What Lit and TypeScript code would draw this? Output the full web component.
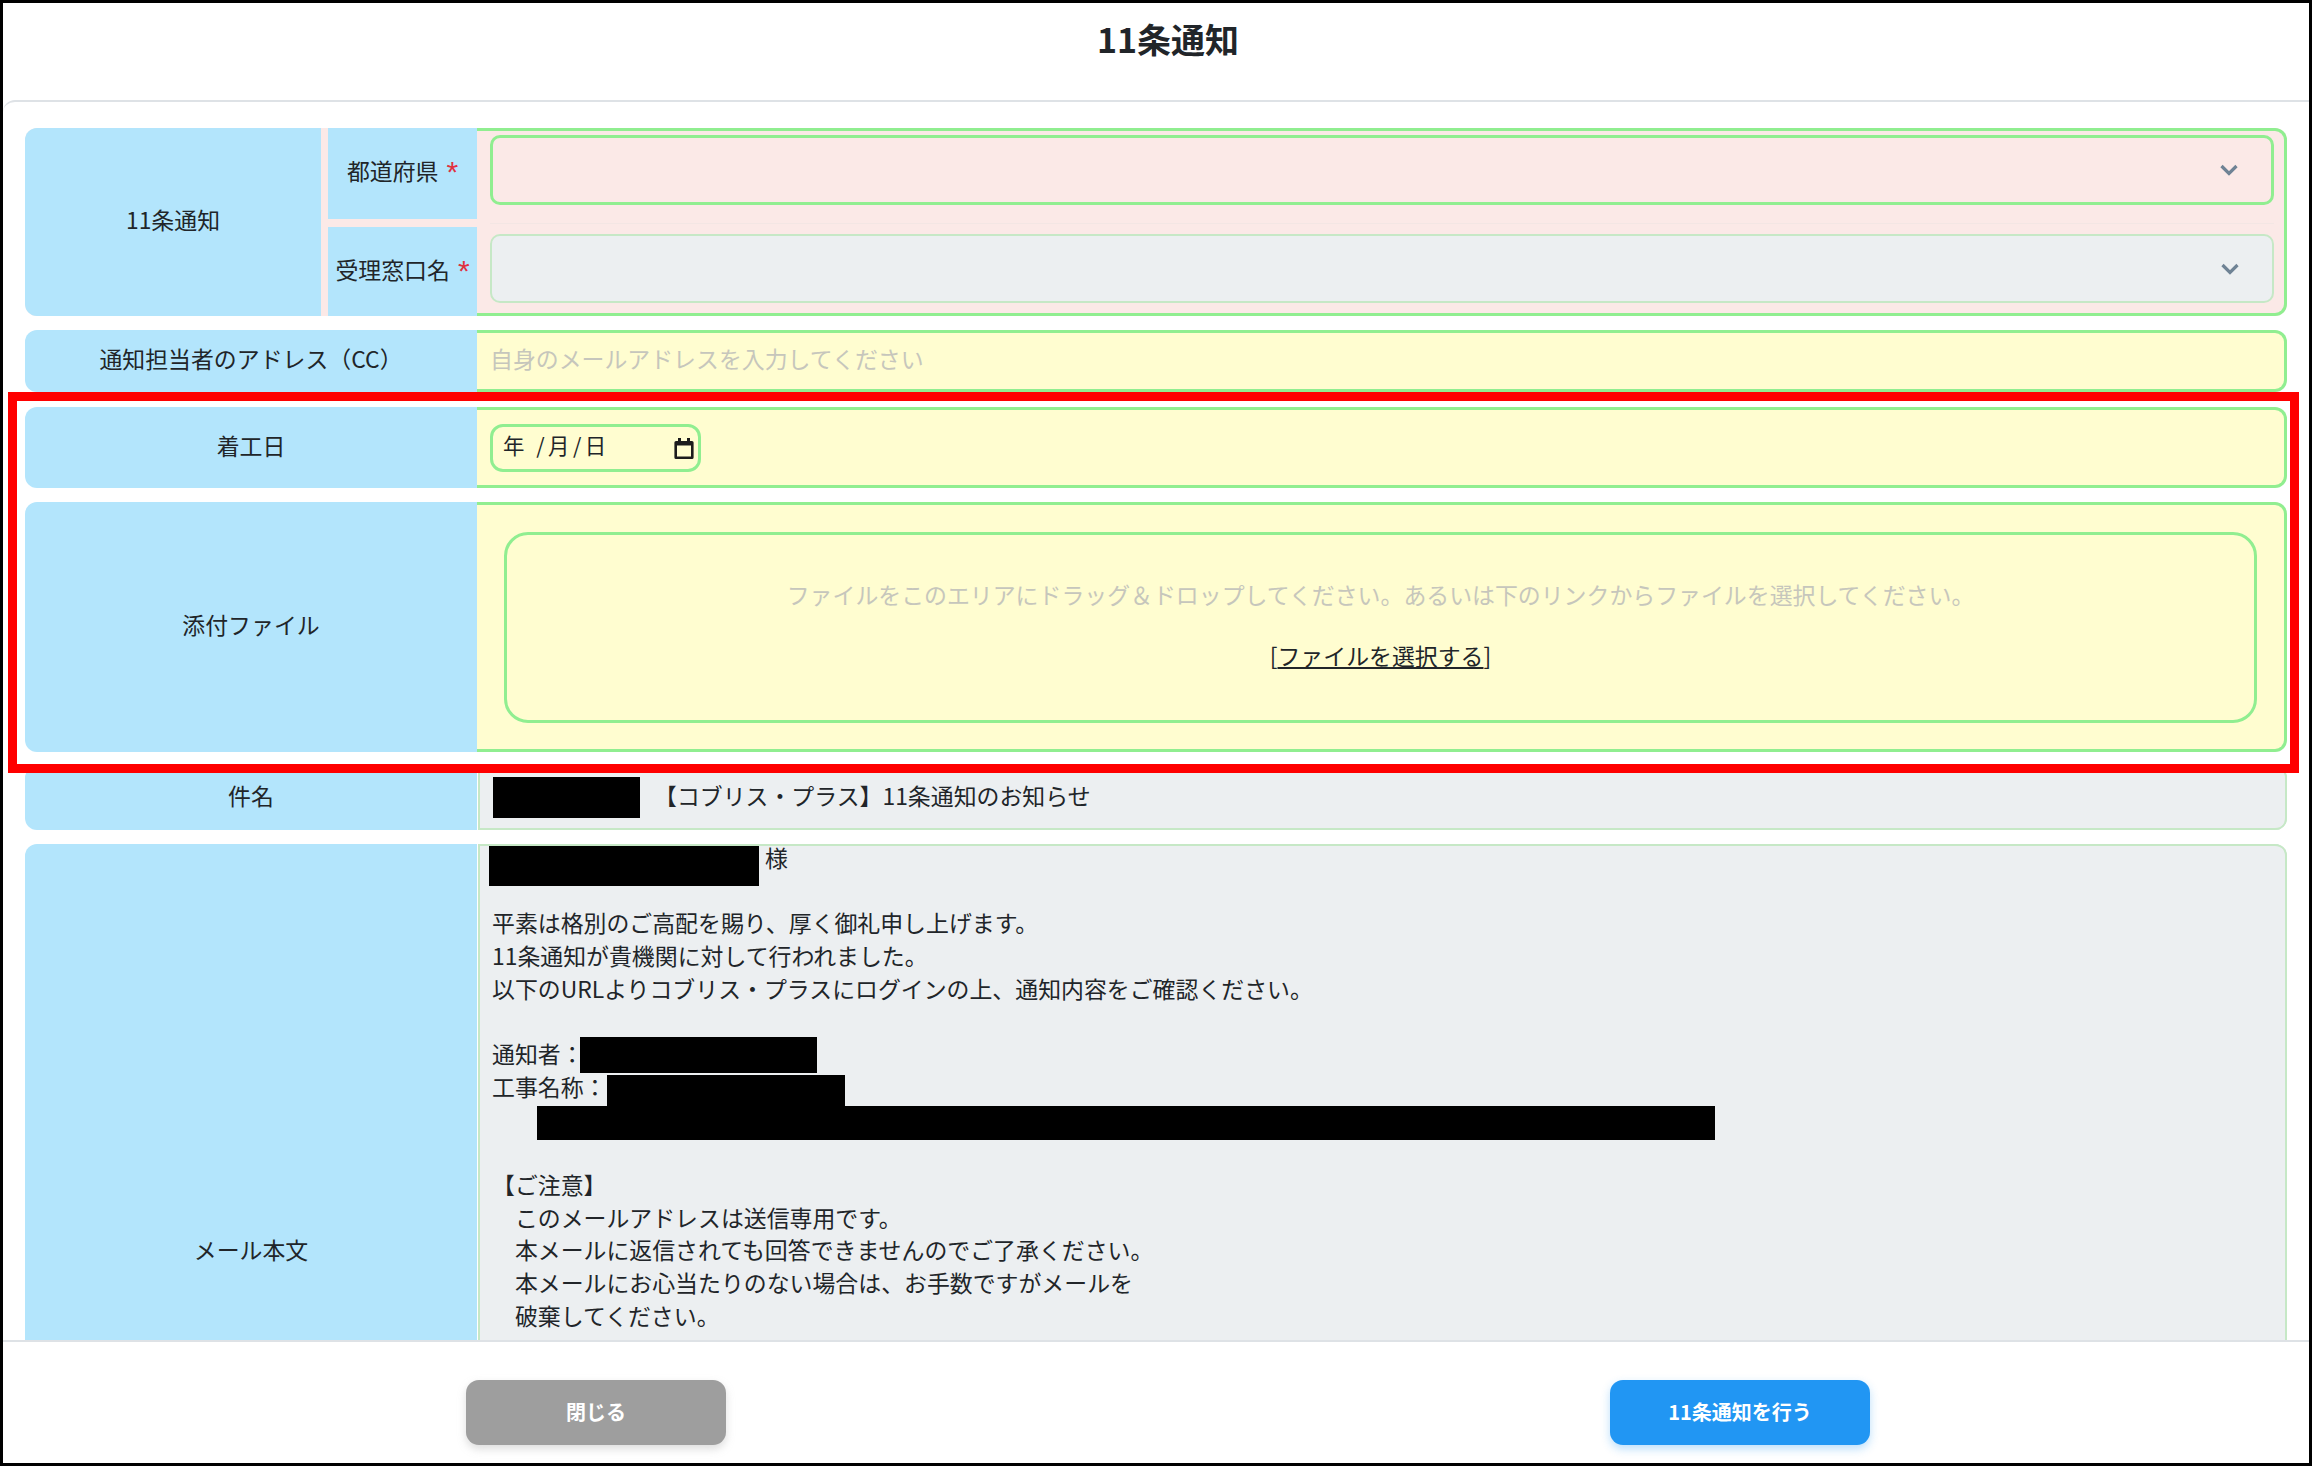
import { LitElement, html, css } from "lit";
import { customElement } from "lit/decorators.js";

const chevron = html`<svg class="chev" viewBox="0 0 18 12" width="18" height="12" aria-hidden="true"><path d="M1.500 2 9 9.500 16.500 2" fill="none" stroke="#6f8395" stroke-width="3.200"/></svg>`;

const calendar = html`<svg class="cal" viewBox="0 0 20 22" width="20" height="22" aria-hidden="true">
  <path d="M4 1h3v3h6V1h3v3h2a1.600 1.600 0 0 1 1.600 1.600v14.800A1.600 1.600 0 0 1 18 22H2a1.600 1.600 0 0 1-1.600-1.600V5.600A1.600 1.600 0 0 1 2 4h2z" fill="#1c1c1c"/>
  <rect x="3" y="8.500" width="14" height="11" fill="#fffdd0"/>
</svg>`;

const mailLines = [
  "",
  "平素は格別のご高配を賜り、厚く御礼申し上げます。",
  "11条通知が貴機関に対して行われました。",
  "以下のURLよりコブリス・プラスにログインの上、通知内容をご確認ください。",
  "",
  "通知者：",
  "工事名称：",
  "",
  "",
  "【ご注意】",
  "　このメールアドレスは送信専用です。",
  "　本メールに返信されても回答できませんのでご了承ください。",
  "　本メールにお心当たりのない場合は、お手数ですがメールを",
  "　破棄してください。",
];

@customElement("app-root")
export class AppRoot extends LitElement {
  static styles = css`
    :host {
      display: block;
      position: relative;
      width: 2312px;
      height: 1466px;
      box-sizing: border-box;
      border: 3px solid #000;
      background: #fff;
      color: #212529;
      font-family: "Noto Sans CJK JP", "Liberation Sans", sans-serif;
      font-size: 22.9px;
      overflow: hidden;
    }
    * { box-sizing: border-box; }
    .modal { display: flex; flex-direction: column; height: 100%; }
    .head {
      height: 97px;
      flex: none;
      padding: 16px 0 0 24px;
      text-align: center;
      font-size: 34px;
      font-weight: 700;
      line-height: 40px;
    }
    .body {
      flex: 1;
      min-height: 0;
      overflow: hidden;
      border-top: 2px solid #dee2e6;
      border-top-left-radius: 12px;
      padding: 26px 22px 0 22px;
      display: flex;
      flex-direction: column;
      gap: 14px;
    }
    .row { display: grid; grid-template-columns: 452px 1fr; flex: none; }
    .row.wide-gap { margin-bottom: 1px; }
    .label {
      background: #b3e5fc;
      display: flex;
      align-items: center;
      justify-content: center;
      border-radius: 12px 0 0 12px;
      padding-bottom: 6px;
    }
    .value {
      border: 3px solid #90ee90;
      border-left: 0;
      border-radius: 0 12px 12px 0;
      background: #fffdd0;
      padding-left: 13px;
      display: flex;
      align-items: center;
    }
    .ro {
      background: #eceff1;
      border: 0;
      box-shadow: inset 2px 0 0 #c6e8c6, inset -2px 0 0 #c6e8c6, inset 0 2px 0 #c6e8c6, inset 0 -2px 0 #c6e8c6;
      margin-left: 1px;
    }
    .up { padding-bottom: 6px; }
    .h-62 { height: 62px; }
    .h-81 { height: 81px; }
    .h-250 { height: 250px; }
    .h-64 { height: 64px; }
    .h-816 { height: 816px; }

    .group {
      display: grid;
      flex: none;
      height: 188px;
      grid-template-columns: 296px 7px 149px 1fr;
      grid-template-rows: 91px 8px 89px;
      background: #fbe9e7;
      border-radius: 12px;
    }
    .group .main { grid-column: 1; grid-row: 1 / 4; padding-bottom: 7px; }
    .group .sub { grid-column: 3; border-radius: 0; gap: 8px; }
    .group .sub.a { grid-row: 1; padding-bottom: 8px; }
    .group .sub.b { grid-row: 3; padding-bottom: 6px; }
    .fields {
      grid-column: 4;
      grid-row: 1 / 4;
      border: 3px solid #90ee90;
      border-left: 0;
      border-radius: 0 12px 12px 0;
      padding: 4px 10px 10px 13px;
      display: flex;
      flex-direction: column;
    }
    .select {
      height: 70px;
      flex: none;
      display: flex;
      align-items: center;
      justify-content: flex-end;
      border-radius: 10px;
    }
    .select.on { border: 3px solid #90ee90; padding-right: 33px; }
    .select.off {
      background: #eceff1;
      border: 2px solid #c6e8c6;
      padding-right: 33px;
      height: 69px;
    }
    .rule { height: 1px; background: #f3e6e4; margin: 18px 0 10px; flex: none; }
    .req {
      color: #e0313f;
      font-family: "Liberation Sans", sans-serif;
      font-size: 30px;
      font-weight: 400;
      line-height: 20px;
      height: 20px;
      padding-top: 2px;
    }
    .placeholder { color: #c6c6bc; }

    .date {
      width: 211px;
      height: 48px;
      border: 3px solid #90ee90;
      border-radius: 13px;
      display: flex;
      align-items: center;
      justify-content: space-between;
      padding: 0 4px 0 10px;
      font-size: 21.4px;
      letter-spacing: 3.5px;
    }
    .cal { display: block; }

    .file-cell { padding: 0 27px 0 27px; }
    .drop {
      flex: 1;
      height: 191px;
      border: 3px solid #90ee90;
      border-radius: 24px;
      display: flex;
      flex-direction: column;
      align-items: center;
      padding-top: 43px;
      gap: 28px;
      line-height: 33px;
    }
    .link-u { text-decoration: underline; }

    .subject { padding-left: 14px; position: relative; }
    .subject .txt { margin-left: 162px; padding-bottom: 6px; }

    .mail {
      position: relative;
      display: block;
      padding: 0 0 0 14px;
      line-height: 32.7px;
    }
    .line { height: 32.7px; white-space: pre; }
    .bar { position: absolute; background: #000; }
    .b-subject { left: 15px; top: 11px; width: 147px; height: 41px; }
    .b-name { left: 11px; top: 2px; width: 270px; height: 40px; }
    .b-notifier { left: 102px; top: 193px; width: 237px; height: 36px; }
    .b-work { left: 129px; top: 231px; width: 238px; height: 31px; }
    .b-long { left: 59px; top: 262px; width: 1178px; height: 34px; }
    .name-line { padding-left: 273px; margin-top: -3px; }

    .foot {
      flex: none;
      height: 123px;
      border-top: 2px solid #dee2e6;
      display: flex;
      justify-content: space-between;
      padding: 38px 439px 0 463px;
      background: #fff;
    }
    .btn {
      width: 260px;
      height: 65px;
      border-radius: 13px;
      color: #fff;
      font-size: 20px;
      font-weight: 700;
      display: flex;
      align-items: center;
      justify-content: center;
      padding-bottom: 3px;
    }
    .gray { background: #9e9e9e; box-shadow: 0 4px 8px rgba(158,158,158,.35); }
    .blue { background: #2196f3; box-shadow: 0 4px 10px rgba(33,150,243,.3); }

    .frame {
      position: absolute;
      left: 5px;
      top: 389px;
      width: 2291px;
      height: 381px;
      border: 9px solid #f00;
      pointer-events: none;
    }
  `;

  render() {
    return html`
      <div class="modal">
        <div class="head">11条通知</div>
        <div class="body">
          <div class="group wide-gap">
            <div class="label main">11条通知</div>
            <div class="label sub a"><span>都道府県</span><span class="req">*</span></div>
            <div class="label sub b"><span>受理窓口名</span><span class="req">*</span></div>
            <div class="fields">
              <div class="select on">${chevron}</div>
              <div class="rule"></div>
              <div class="select off">${chevron}</div>
            </div>
          </div>

          <div class="row h-62 wide-gap">
            <div class="label">通知担当者のアドレス（CC）</div>
            <div class="value placeholder"><span class="up">自身のメールアドレスを入力してください</span></div>
          </div>

          <div class="row h-81">
            <div class="label">着工日</div>
            <div class="value">
              <div class="date"><span class="up">年 /月/日</span>${calendar}</div>
            </div>
          </div>

          <div class="row h-250">
            <div class="label">添付ファイル</div>
            <div class="value file-cell">
              <div class="drop">
                <div class="placeholder">ファイルをこのエリアにドラッグ＆ドロップしてください。あるいは下のリンクからファイルを選択してください。</div>
                <div>[<span class="link-u">ファイルを選択する</span>]</div>
              </div>
            </div>
          </div>

          <div class="row h-64">
            <div class="label">件名</div>
            <div class="value ro subject">
              <span class="bar b-subject"></span>
              <span class="txt">【コブリス・プラス】11条通知のお知らせ</span>
            </div>
          </div>

          <div class="row h-816">
            <div class="label">メール本文</div>
            <div class="value ro mail">
              <span class="bar b-name"></span>
              <span class="bar b-notifier"></span>
              <span class="bar b-work"></span>
              <span class="bar b-long"></span>
              <div class="line name-line">様</div>
              ${mailLines.map((l) => html`<div class="line">${l}</div>`)}
            </div>
          </div>
        </div>
        <div class="foot">
          <div class="btn gray">閉じる</div>
          <div class="btn blue">11条通知を行う</div>
        </div>
      </div>
      <div class="frame"></div>
    `;
  }
}
